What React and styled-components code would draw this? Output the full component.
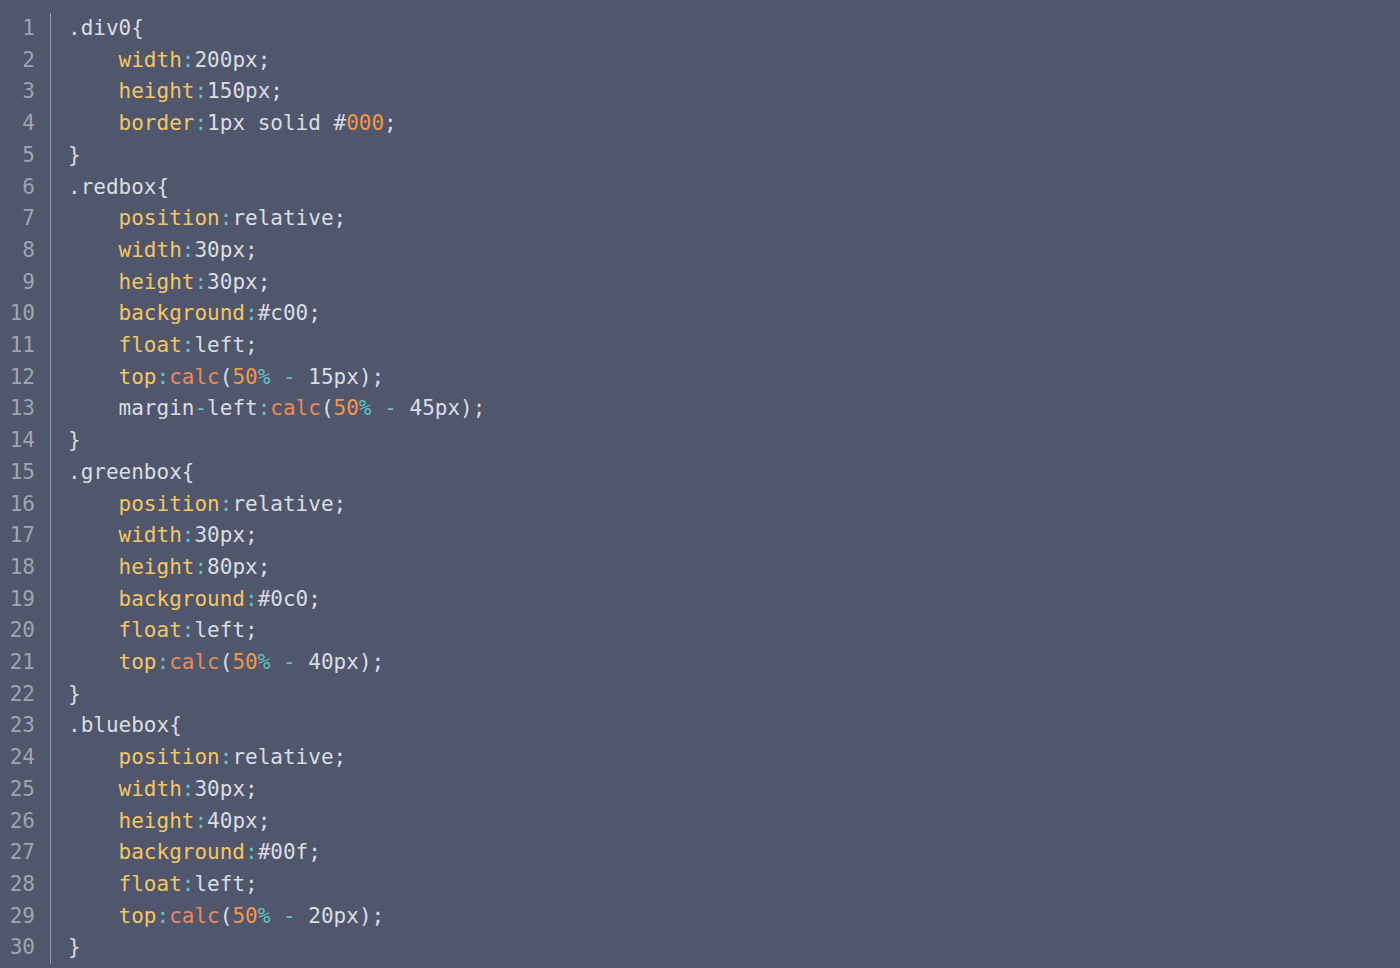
import React from "react";
import styled, { createGlobalStyle } from "styled-components";

const GlobalStyle = createGlobalStyle`
  html, body {
    margin: 0;
    padding: 0;
    background-color: rgb(80, 86, 107);
  }
`;

const Editor = styled.div`
  background-color: rgb(80, 86, 107);
  min-height: 968px;
  box-sizing: border-box;
  padding-top: 12px;
  font-family: "DejaVu Sans Mono", "Liberation Mono", monospace;
  font-size: 21px;
  line-height: 31.7px;
  color: rgb(218, 221, 230);
`;

const Row = styled.div`
  display: flex;
  white-space: pre;
  padding-top: 1px;
  margin-bottom: -1px;
`;

const LineNo = styled.div`
  width: 50px;
  box-sizing: border-box;
  padding-right: 15px;
  text-align: right;
  color: rgb(160, 164, 178);
  flex-shrink: 0;
`;

const Code = styled.div`
  border-left: 1px solid rgb(150, 154, 168);
  padding-left: 17px;
`;

const Prop = styled.span`
  color: rgb(243, 198, 102);
`;

const Punct = styled.span`
  color: rgb(98, 196, 196);
`;

const Fn = styled.span`
  color: rgb(232, 138, 92);
`;

const Num = styled.span`
  color: rgb(242, 152, 72);
`;

const Indent = "    ";

const decl = (name, value) => (
  <>
    {Indent}
    <Prop>{name}</Prop>
    <Punct>:</Punct>
    {value};
  </>
);

const calc = (op) => (
  <>
    <Fn>calc</Fn>(<Num>50</Num>
    <Punct>%</Punct> <Punct>-</Punct> {op})
  </>
);

const lines = [
  <>.div0{"{"}</>,
  decl("width", "200px"),
  decl("height", "150px"),
  decl(
    "border",
    <>
      1px solid #<Num>000</Num>
    </>
  ),
  <>{"}"}</>,
  <>.redbox{"{"}</>,
  decl("position", "relative"),
  decl("width", "30px"),
  decl("height", "30px"),
  decl("background", "#c00"),
  decl("float", "left"),
  decl("top", calc("15px")),
  <>
    {Indent}margin<Punct>-</Punct>left<Punct>:</Punct>
    {calc("45px")};
  </>,
  <>{"}"}</>,
  <>.greenbox{"{"}</>,
  decl("position", "relative"),
  decl("width", "30px"),
  decl("height", "80px"),
  decl("background", "#0c0"),
  decl("float", "left"),
  decl("top", calc("40px")),
  <>{"}"}</>,
  <>.bluebox{"{"}</>,
  decl("position", "relative"),
  decl("width", "30px"),
  decl("height", "40px"),
  decl("background", "#00f"),
  decl("float", "left"),
  decl("top", calc("20px")),
  <>{"}"}</>,
];

const App = () => {
  return (
    <Editor>
      <GlobalStyle />
      {lines.map((line, i) => (
        <Row key={i}>
          <LineNo>{i + 1}</LineNo>
          <Code>{line}</Code>
        </Row>
      ))}
    </Editor>
  );
};

export default App;
